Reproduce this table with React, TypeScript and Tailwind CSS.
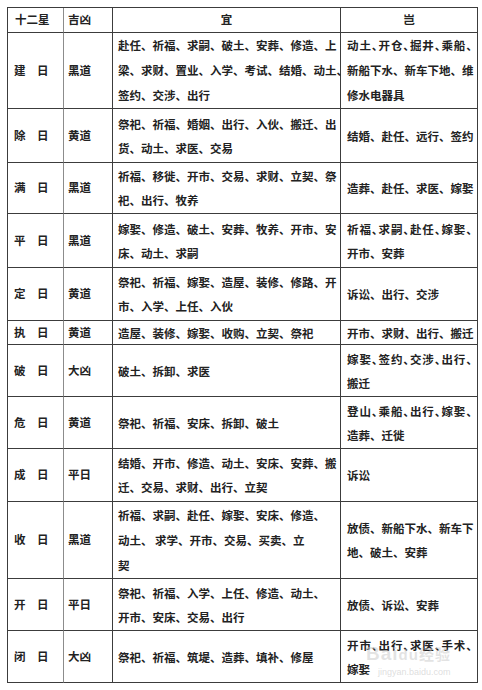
type Row = {
  star: string;
  luck: string;
  h: string;
  yi: string[];
  ji: string[];
};

const rows: Row[] = [
  {
    star: "建　日",
    luck: "黑道",
    h: "h-[76px]",
    yi: ["赴任、祈福、求嗣、破土、安葬、修造、上", "梁、求财、置业、入学、考试、结婚、动土、", "签约、交涉、出行"],
    ji: ["动土、开仓、掘井、乘船、", "新船下水、新车下地、维", "修水电器具"],
  },
  {
    star: "除　日",
    luck: "黄道",
    h: "h-[54px]",
    yi: ["祭祀、祈福、婚姻、出行、入伙、搬迁、出", "货、动土、求医、交易"],
    ji: ["结婚、赴任、远行、签约"],
  },
  {
    star: "满　日",
    luck: "黑道",
    h: "h-[51px]",
    yi: ["祈福、移徙、开市、交易、求财、立契、祭", "祀、出行、牧养"],
    ji: ["造葬、赴任、求医、嫁娶"],
  },
  {
    star: "平　日",
    luck: "黑道",
    h: "h-[54px]",
    yi: ["嫁娶、修造、破土、安葬、牧养、开市、安", "床、动土、求嗣"],
    ji: ["祈福、求嗣、赴任、嫁娶、", "开市、安葬"],
  },
  {
    star: "定　日",
    luck: "黄道",
    h: "h-[53px]",
    yi: ["祭祀、祈福、嫁娶、造屋、装修、修路、开", "市、入学、上任、入伙"],
    ji: ["诉讼、出行、交涉"],
  },
  {
    star: "执　日",
    luck: "黄道",
    h: "h-[24px]",
    yi: ["造屋、装修、嫁娶、收购、立契、祭祀"],
    ji: ["开市、求财、出行、搬迁"],
  },
  {
    star: "破　日",
    luck: "大凶",
    h: "h-[52px]",
    yi: ["破土、拆卸、求医"],
    ji: ["嫁娶、签约、交涉、出行、", "搬迁"],
  },
  {
    star: "危　日",
    luck: "黄道",
    h: "h-[52px]",
    yi: ["祭祀、祈福、安床、拆卸、破土"],
    ji: ["登山、乘船、出行、嫁娶、", "造葬、迁徙"],
  },
  {
    star: "成　日",
    luck: "平日",
    h: "h-[53px]",
    yi: ["结婚、开市、修造、动土、安床、安葬、搬", "迁、交易、求财、出行、立契"],
    ji: ["诉讼"],
  },
  {
    star: "收　日",
    luck: "黑道",
    h: "h-[77px]",
    yi: ["祈福、求嗣、赴任、嫁娶、安床、修造、", "动土、 求学、开市、交易、买卖、立", "契"],
    ji: ["放债、新船下水、新车下", "地、破土、安葬"],
  },
  {
    star: "开　日",
    luck: "平日",
    h: "h-[52px]",
    yi: ["祭祀、祈福、入学、上任、修造、动土、", "开市、安床、交易、出行"],
    ji: ["放债、诉讼、安葬"],
  },
  {
    star: "闭　日",
    luck: "大凶",
    h: "h-[52px]",
    yi: ["祭祀、祈福、筑堤、造葬、填补、修屋"],
    ji: ["开市、出行、求医、手术、", "嫁娶"],
  },
];

const Lines = ({ lines, tight }: { lines: string[]; tight?: boolean }) => (
  <div className={lines.length >= 3 ? "leading-[25px]" : "leading-[24px]"}>
    {lines.map((l, i) => {
      const full = tight && [...l].length >= 12;
      return (
        <div
          key={i}
          className={
            full
              ? "whitespace-pre [font-feature-settings:'halt'] [text-align-last:justify] text-justify"
              : "whitespace-pre"
          }
        >
          {l}
        </div>
      );
    })}
  </div>
);

export default function App() {
  return (
    <div className="relative min-h-[690px] w-[482px] bg-white pt-[7px] pl-[7px] font-['Noto_Sans_CJK_SC',sans-serif] text-[11.5px] font-bold text-[#222]">
      <div className="w-[471px] border-t border-l border-[#3c3c3c]">
        <div className="flex h-[25px]">
          <div className="flex w-[56px] items-center border-r border-b border-r-[#8c8c8c] border-b-[#3c3c3c] pl-[7px]">十二星</div>
          <div className="flex w-[49px] items-center border-r border-b border-[#3c3c3c] pl-[4px]">吉凶</div>
          <div className="flex w-[228px] items-center justify-center border-r border-b border-[#3c3c3c]">宜</div>
          <div className="flex w-[137px] items-center justify-center border-r border-b border-[#3c3c3c]">岂</div>
        </div>
        {rows.map((r) => (
          <div key={r.star} className={`flex ${r.h}`}>
            <div className="flex w-[56px] items-center whitespace-pre border-r border-b border-r-[#8c8c8c] border-b-[#3c3c3c] pl-[6px]">
              {r.star}
            </div>
            <div className="flex w-[49px] items-center border-r border-b border-[#3c3c3c] pl-[4px]">{r.luck}</div>
            <div className="flex w-[228px] items-center border-r border-b border-[#3c3c3c] pl-[5px]">
              <Lines lines={r.yi} />
            </div>
            <div className="flex w-[137px] items-center border-r border-b border-[#3c3c3c] pl-[6px] pr-[5px]">
              <div className="w-full">
                <Lines lines={r.ji} tight />
              </div>
            </div>
          </div>
        ))}
      </div>
      <div className="pointer-events-none absolute top-[644px] left-[366px] font-['Liberation_Sans',sans-serif] text-[19px] font-bold leading-none tracking-[1px] text-[#c8c8c8]/50">
        Bai<span className="text-[15px]">du</span>
        <span className="font-['Noto_Sans_CJK_SC',sans-serif] text-[15px]">经验</span>
      </div>
      <div className="pointer-events-none absolute top-[668px] left-[378px] font-['Liberation_Sans',sans-serif] text-[9px] font-normal leading-none text-[#c8c8c8]/60">
        jingyan.baidu.com
      </div>
    </div>
  );
}
